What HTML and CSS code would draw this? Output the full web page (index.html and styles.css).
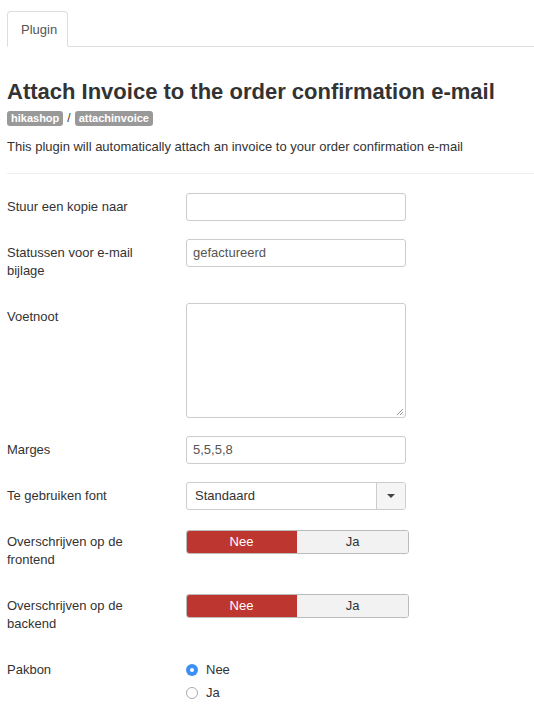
FILE: index.html
```html
<!DOCTYPE html>
<html>
<head>
<meta charset="utf-8">
<link rel="stylesheet" href="styles.css">
</head>
<body>
<div class="page">
  <div class="tabs">
    <div class="tab">Plugin</div>
  </div>
  <h1 class="title">Attach Invoice to the order confirmation e-mail</h1>
  <div class="crumbs"><span class="badge">hikashop</span><span class="sep">/</span><span class="badge">attachinvoice</span></div>
  <p class="desc">This plugin will automatically attach an invoice to your order confirmation e-mail</p>
  <hr class="rule">
  <div class="form">
    <div class="row">
      <div class="label">Stuur een kopie naar</div>
      <div class="control"><div class="input"></div></div>
    </div>
    <div class="row">
      <div class="label">Statussen voor e-mail bijlage</div>
      <div class="control"><div class="input">gefactureerd</div></div>
    </div>
    <div class="row">
      <div class="label">Voetnoot</div>
      <div class="control">
        <div class="textarea">
          <svg class="grip" width="9" height="9" viewBox="0 0 9 9"><path d="M8 2 L2 8 M8 5 L5 8 M8 7.5 L7.5 8" stroke="#999" stroke-width="1" fill="none"/></svg>
        </div>
      </div>
    </div>
    <div class="row">
      <div class="label">Marges</div>
      <div class="control"><div class="input">5,5,5,8</div></div>
    </div>
    <div class="row">
      <div class="label">Te gebruiken font</div>
      <div class="control">
        <div class="select"><span class="sel-text">Standaard</span><span class="sel-btn"><span class="caret"></span></span></div>
      </div>
    </div>
    <div class="row">
      <div class="label">Overschrijven op de frontend</div>
      <div class="control">
        <div class="toggle"><span class="opt on">Nee</span><span class="opt">Ja</span></div>
      </div>
    </div>
    <div class="row">
      <div class="label">Overschrijven op de backend</div>
      <div class="control">
        <div class="toggle"><span class="opt on">Nee</span><span class="opt">Ja</span></div>
      </div>
    </div>
    <div class="row">
      <div class="label">Pakbon</div>
      <div class="control radios">
        <div class="radio"><span class="dot checked"></span>Nee</div>
        <div class="radio"><span class="dot"></span>Ja</div>
      </div>
    </div>
  </div>
</div>
</body>
</html>
```
FILE: styles.css
```css
html, body {
  margin: 0;
  padding: 0;
  background: #fff;
}
body {
  font-family: "Liberation Sans", Arial, sans-serif;
  font-size: 13px;
  line-height: 18px;
  color: #333;
}
.page {
  padding: 11px 0 0 7px;
}
.tabs {
  display: flex;
  border-bottom: 1px solid #ddd;
  height: 35px;
}
.tab {
  width: 61px;
  box-sizing: border-box;
  border: 1px solid #ddd;
  border-bottom-color: #fff;
  border-radius: 4px 4px 0 0;
  background: #fff;
  margin-bottom: -1px;
  height: 36px;
  padding-left: 13px;
  line-height: 36px;
  color: #555;
}
.title {
  margin: 33px 0 0 0;
  font-size: 22px;
  line-height: 24px;
  font-weight: bold;
  color: #333;
}
.crumbs {
  margin-top: 6px;
  display: flex;
  align-items: center;
  height: 16px;
}
.badge {
  display: inline-block;
  background: #999;
  color: #fff;
  font-weight: bold;
  font-size: 11px;
  line-height: 15px;
  padding: 0 4px;
  border-radius: 3px;
}
.sep {
  margin: 0 4px;
  color: #333;
  font-size: 12px;
}
.desc {
  margin: 12px 0 0 0;
}
.rule {
  margin: 17px 0 19px 0;
  border: 0;
  border-top: 1px solid #eee;
}
.row {
  display: flex;
  margin-bottom: 18px;
}
.label {
  width: 160px;
  margin-right: 19px;
  padding: 5px 0;
  flex: none;
}
.control {
  flex: none;
}
.input {
  width: 220px;
  height: 28px;
  box-sizing: border-box;
  border: 1px solid #ccc;
  border-radius: 3px;
  padding: 4px 6px;
  color: #555;
}
.textarea {
  position: relative;
  width: 220px;
  height: 115px;
  box-sizing: border-box;
  border: 1px solid #ccc;
  border-radius: 3px;
}
.grip {
  position: absolute;
  right: 1px;
  bottom: 1px;
}
.select {
  display: flex;
  width: 220px;
  height: 28px;
  box-sizing: border-box;
  border: 1px solid #ccc;
  border-radius: 3px;
  overflow: hidden;
}
.sel-text {
  flex: 1;
  padding: 4px 8px;
  color: #333;
}
.sel-btn {
  width: 28px;
  border-left: 1px solid #ccc;
  background: #f5f5f5;
  display: flex;
  align-items: center;
  justify-content: center;
}
.caret {
  width: 0;
  height: 0;
  border-left: 4px solid transparent;
  border-right: 4px solid transparent;
  border-top: 4px solid #444;
}
.toggle {
  display: flex;
  width: 223px;
  height: 24px;
  margin-top: 2px;
  box-sizing: border-box;
  border: 1px solid #bbb;
  border-radius: 3px;
  overflow: hidden;
}
.opt {
  flex: 1;
  text-align: center;
  line-height: 22px;
  background: #f2f2f2;
  color: #333;
}
.opt.on {
  background: #bd362f;
  color: #fff;
  margin: -1px 0 -1px -1px;
  line-height: 24px;
}
.radios {
  padding-top: 5px;
}
.radio {
  display: flex;
  align-items: center;
  height: 18px;
  margin-bottom: 5px;
}
.dot {
  width: 12px;
  height: 12px;
  box-sizing: border-box;
  border: 1px solid #aaa;
  border-radius: 50%;
  margin-right: 8px;
  background: #fff;
  position: relative;
}
.dot.checked {
  border: 0;
  background: #3b8ff5;
}
.dot.checked::after {
  content: "";
  position: absolute;
  left: 4px;
  top: 4px;
  width: 4px;
  height: 4px;
  border-radius: 50%;
  background: #fff;
}
```
